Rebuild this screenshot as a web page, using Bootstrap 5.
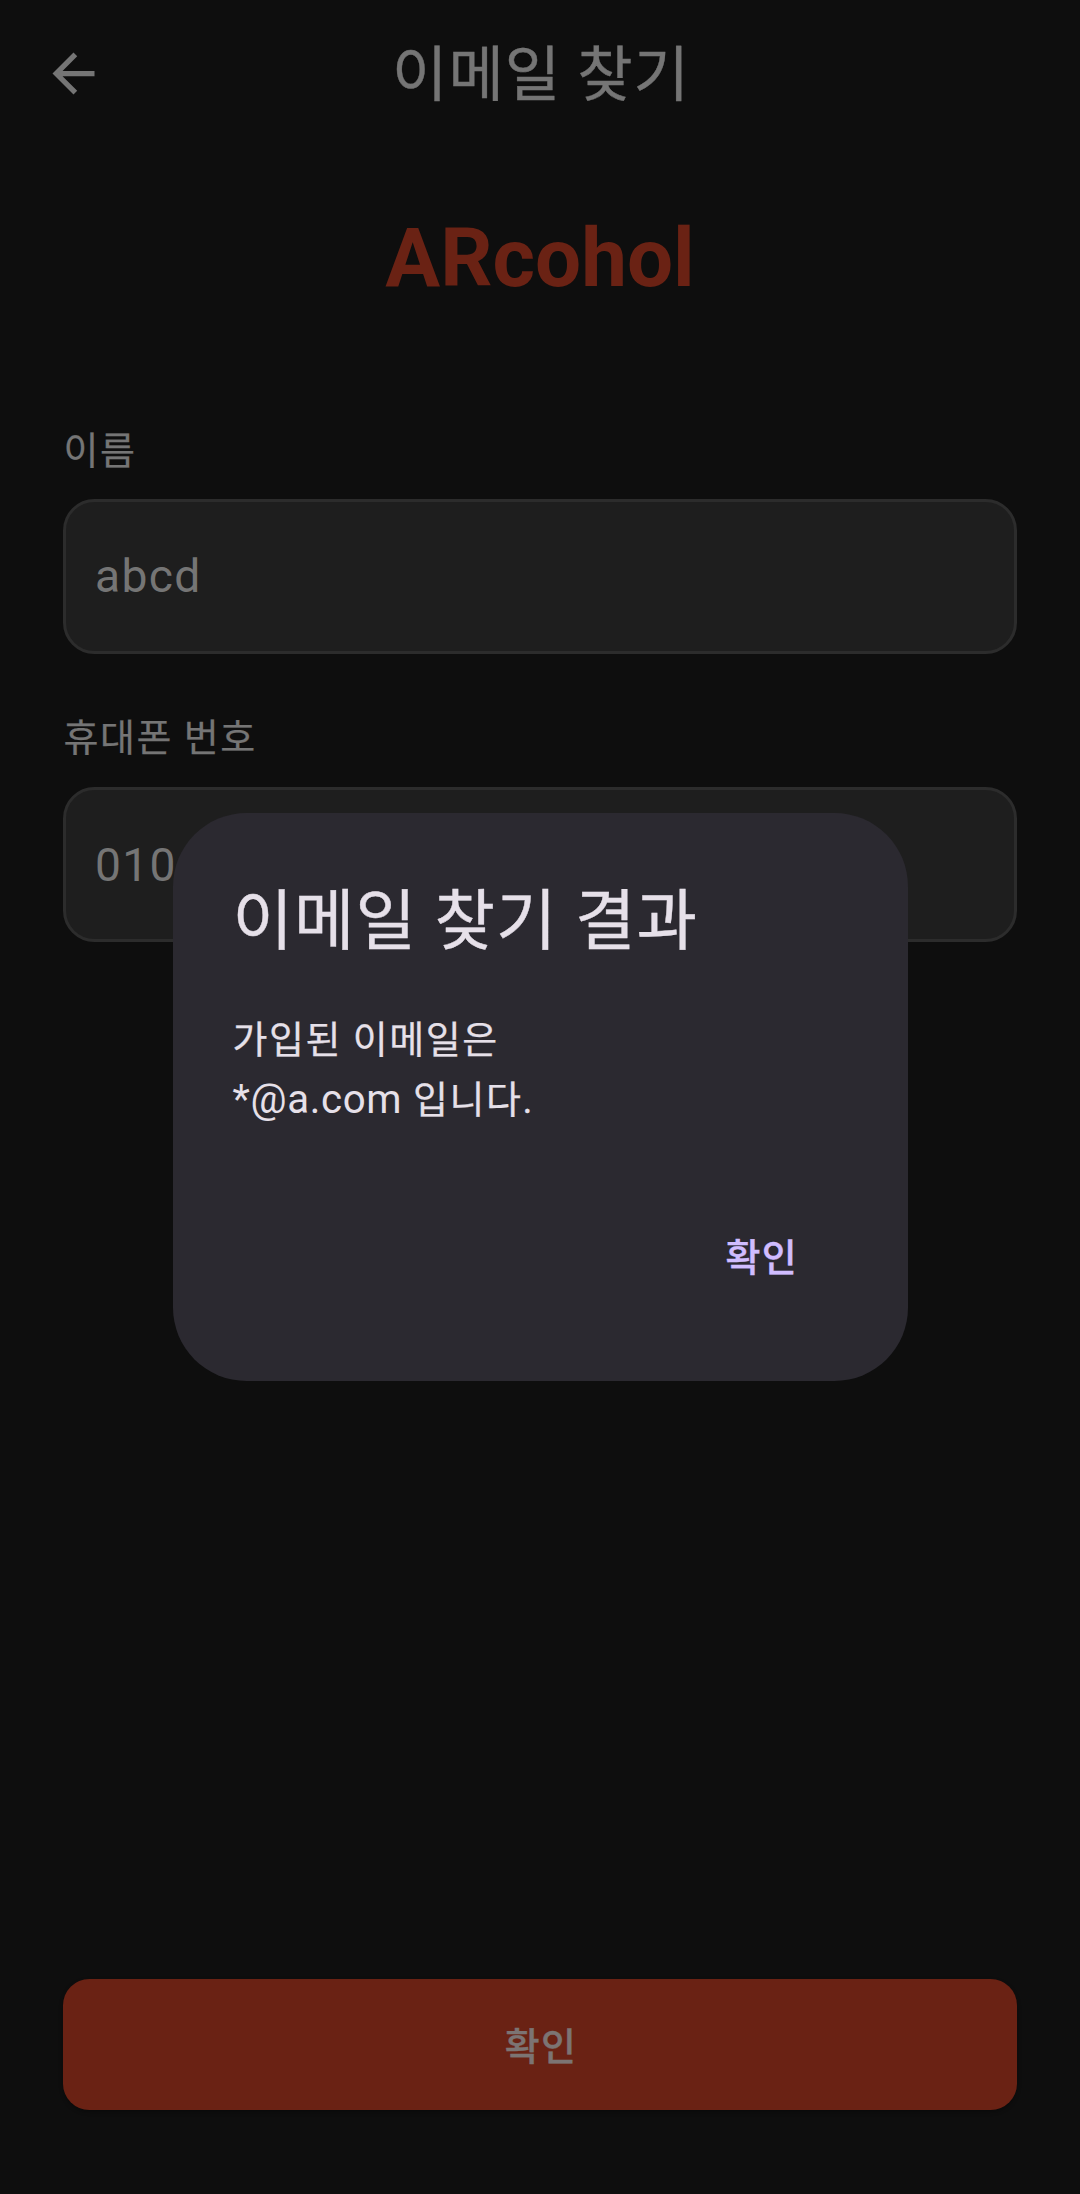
<!DOCTYPE html>
<html lang="ko" data-bs-theme="dark">
<head>
<meta charset="utf-8">
<meta name="viewport" content="width=device-width, initial-scale=1">
<title>이메일 찾기</title>
<link href="https://cdn.jsdelivr.net/npm/bootstrap@5.3.0/dist/css/bootstrap.min.css" rel="stylesheet">
<style>
  body { background: #0e0e0e; color: #757575; font-family: Roboto, "Noto Sans CJK KR", sans-serif; }
  .screen { height: 2194px; padding: 0 63px 84px; }
  .top-bar { height: 147px; margin: 0 -21px; }
  .top-bar svg { width: 63px; height: 63px; }
  .screen-title { color: #757575; font-size: 60.2px; line-height: 74px; letter-spacing: 1px; padding: 5px 0 0 2px; -webkit-text-stroke: .4px; }
  .brand { color: #6a2214; font-size: 81.7px; line-height: 98px; margin-top: 62px; }
  .field-label { font-size: 38px; line-height: 52px; letter-spacing: 1.5px; padding-left: .5px; -webkit-text-stroke: .25px; }
  .first-label { margin-top: 118px; }
  .next-label { margin-top: 58px; }
  .form-control.field { height: 155px; margin-top: 22px; border: 3px solid #2c2c2c; border-radius: 31.5px; background: #1e1e1e; color: #757575; font-size: 46.2px; letter-spacing: 1.3px; padding: 0 29px 1px; }
  .next-field.form-control { margin-top: 23px; padding-bottom: 0; }
  .confirm { height: 131.5px; border-radius: 26.25px; background: #6a2214; color: #7c7473; border: 0; font-size: 38px; letter-spacing: 1.3px; padding: 6px 0 0 2px; box-shadow: 0 2px 4px rgba(0,0,0,.3); -webkit-text-stroke: .4px; }
  .dialog-layer { z-index: 10; }
  .dialog-box { width: 735px; height: 568px; border-radius: 73.5px; background: #2b2930; color: #e6e0e9; padding: 63px 60px; }
  .dialog-title { color: #e6e0e9; font-size: 65.7px; line-height: 92px; letter-spacing: 1.1px; -webkit-text-stroke: .4px; }
  .dialog-text { font-size: 38px; line-height: 60px; letter-spacing: 1.5px; margin-top: 42px; -webkit-text-stroke: .25px; }
  .mail { font-size: 40.2px; letter-spacing: .66px; line-height: 1; -webkit-text-stroke: 0; }
  .dialog-action { color: #d0bcff; font-size: 38px; line-height: 52px; padding: 0 49.5px; margin-bottom: 34px; letter-spacing: 1.3px; -webkit-text-stroke: .4px; }
</style>
<script src="https://cdn.jsdelivr.net/npm/bootstrap@5.3.0/dist/js/bootstrap.bundle.min.js"></script>
</head>
<body>
<main class="screen d-flex flex-column position-relative overflow-hidden">
  <header class="top-bar d-flex align-items-center justify-content-between">
    <svg viewBox="0 0 24 24" fill="#757575" aria-hidden="true"><path d="M20 11H7.83l5.59-5.59L12 4l-8 8 8 8 1.41-1.41L7.83 13H20v-2z"/></svg>
    <h1 class="screen-title fw-normal m-0">이메일 찾기</h1>
    <svg viewBox="0 0 24 24" aria-hidden="true"></svg>
  </header>
  <div class="brand fw-bold text-center">ARcohol</div>
  <form class="d-flex flex-column flex-grow-1">
    <label class="field-label first-label" for="name">이름</label>
    <input class="form-control field" id="name" value="abcd">
    <label class="field-label next-label" for="phone">휴대폰 번호</label>
    <input class="form-control field next-field" id="phone" value="010-1234-5678">
    <button class="btn confirm fw-medium w-100 mt-auto" type="button">확인</button>
  </form>
  <div class="dialog-layer position-absolute top-0 start-0 w-100 h-100 d-flex align-items-center justify-content-center">
    <section class="dialog-box d-flex flex-column" role="dialog">
      <h2 class="dialog-title fw-normal m-0">이메일 찾기 결과</h2>
      <p class="dialog-text mb-0">가입된 이메일은<br><span class="mail">*@a.com</span> 입니다.</p>
      <button class="btn dialog-action fw-medium border-0 align-self-end mt-auto" type="button">확인</button>
    </section>
  </div>
</main>
</body>
</html>
